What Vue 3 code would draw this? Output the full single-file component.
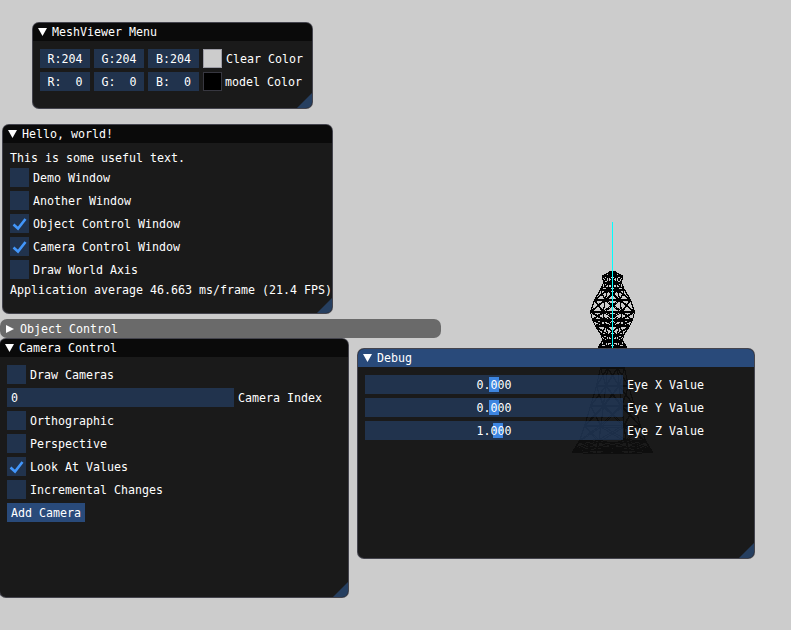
<template>
  <div class="canvas">
    <svg class="scene" width="791" height="630" shape-rendering="crispEdges">
      <path :d="meshPath" fill="none" stroke="#000" stroke-width="1" />
      <rect x="612" y="222" width="1" height="127" fill="#0ff" />
    </svg>

    <section class="window menu-win">
      <header class="title"><i class="arrow"></i>MeshViewer Menu</header>
      <div class="body">
        <div v-for="row in colorRows" :key="row.label" class="row color-row">
          <span v-for="c in row.channels" :key="c" class="frame channel">{{ c }}</span>
          <span class="swatch" :class="row.swatch"></span>
          <span class="label" :class="row.labelClass">{{ row.label }}</span>
        </div>
      </div>
      <i class="grip"></i>
    </section>

    <section class="window hello-win">
      <header class="title"><i class="arrow"></i>Hello, world!</header>
      <div class="body">
        <div class="line">This is some useful text.</div>
        <div v-for="item in helloChecks" :key="item.label" class="row">
          <span class="box">
            <svg v-if="item.on" width="19" height="19"><path d="M3.5 10.5 L8 14.5 L15.5 5" class="tick" /></svg>
          </span>
          <span class="label">{{ item.label }}</span>
        </div>
        <div class="line">Application average 46.663 ms/frame (21.4 FPS)</div>
      </div>
      <i class="grip"></i>
    </section>

    <header class="title collapsed"><i class="arrow right"></i>Object Control</header>

    <section class="window camera-win">
      <header class="title"><i class="arrow"></i>Camera Control</header>
      <div class="body">
        <div class="row">
          <span class="box"></span>
          <span class="label">Draw Cameras</span>
        </div>
        <div class="row">
          <span class="frame input">0</span>
          <span class="label">Camera Index</span>
        </div>
        <div v-for="item in cameraChecks" :key="item.label" class="row">
          <span class="box">
            <svg v-if="item.on" width="19" height="19"><path d="M3.5 10.5 L8 14.5 L15.5 5" class="tick" /></svg>
          </span>
          <span class="label">{{ item.label }}</span>
        </div>
        <div class="row">
          <button class="button">Add Camera</button>
        </div>
      </div>
      <i class="grip"></i>
    </section>

    <section class="window debug-win">
      <header class="title active"><i class="arrow"></i>Debug</header>
      <div class="body">
        <div v-for="s in sliders" :key="s.label" class="row">
          <div class="frame slider">
            <i class="grab" :style="{ left: s.grab + 'px' }"></i>
            <span class="slider-value">{{ s.value }}</span>
          </div>
          <span class="label">{{ s.label }}</span>
        </div>
      </div>
      <i class="grip"></i>
    </section>
  </div>
</template>

<script setup>
const colorRows = [
  { channels: ['R:204', 'G:204', 'B:204'], swatch: 'light', label: 'Clear Color', labelClass: '' },
  { channels: ['R:  0', 'G:  0', 'B:  0'], swatch: 'dark', label: 'model Color', labelClass: 'nudge' },
]

const helloChecks = [
  { label: 'Demo Window', on: false },
  { label: 'Another Window', on: false },
  { label: 'Object Control Window', on: true },
  { label: 'Camera Control Window', on: true },
  { label: 'Draw World Axis', on: false },
]

const cameraChecks = [
  { label: 'Orthographic', on: false },
  { label: 'Perspective', on: false },
  { label: 'Look At Values', on: true },
  { label: 'Incremental Changes', on: false },
]

const sliders = [
  { label: 'Eye X Value', value: '0.000', grab: 124 },
  { label: 'Eye Y Value', value: '0.000', grab: 124 },
  { label: 'Eye Z Value', value: '1.000', grab: 128 },
]

// rough wireframe of the model: [y, radius] rings around the centre line
const profile = [
  [272, 3], [276, 10], [283, 9], [290, 12], [300, 18], [312, 22], [320, 20],
  [326, 17], [335, 11], [341, 10], [347, 14], [368, 12], [386, 16], [406, 22], [426, 28],
  [441, 33], [449, 38], [452, 40],
]

function buildMesh() {
  const cx = 612.5
  const n = 8
  const pt = (ring, j) => {
    const a = ((j + 0.5) / n) * Math.PI * 2
    const [y, r] = profile[ring]
    return `${(cx + Math.cos(a) * r * 1.08).toFixed(1)} ${(y + Math.sin(a) * r * 0.04).toFixed(1)}`
  }
  let d = ''
  profile.forEach((_, i) => {
    for (let j = 0; j < n; j++) {
      d += `M${pt(i, j)}L${pt(i, j + 1)}`
      if (i < profile.length - 1) {
        d += `M${pt(i, j)}L${pt(i + 1, j)}M${pt(i, j)}L${pt(i + 1, j + 1)}M${pt(i, j + 1)}L${pt(i + 1, j)}`
      }
    }
  })
  return d
}

const meshPath = buildMesh()
</script>

<style>
html,
body {
  margin: 0;
  background: #ccc;
  overflow: hidden;
}
</style>

<style scoped>
.canvas {
  position: relative;
  width: 791px;
  height: 630px;
  overflow: hidden;
  background: #ccc;
  color: #fff;
  font-family: "DejaVu Sans Mono", monospace;
  font-size: 11.63px;
  line-height: 13px;
  white-space: pre;
}

.scene {
  position: absolute;
  left: 0;
  top: 0;
}

.window {
  position: absolute;
  box-sizing: border-box;
  display: flex;
  flex-direction: column;
  border: 1px solid rgba(110, 110, 128, 0.5);
  border-radius: 7px;
  background: rgba(15, 15, 15, 0.94);
  overflow: hidden;
}

.menu-win {
  left: 32px;
  top: 22px;
  width: 281px;
  height: 87px;
}

.hello-win {
  left: 2px;
  top: 124px;
  width: 331px;
  height: 190px;
}

.camera-win {
  left: -1px;
  top: 338px;
  width: 350px;
  height: 260px;
}

.debug-win {
  left: 357px;
  top: 348px;
  width: 398px;
  height: 211px;
}

.title {
  box-sizing: border-box;
  display: flex;
  align-items: center;
  flex: none;
  height: 18px;
  padding: 1px 0 0 5px;
  background: #0a0a0a;
}

.title.active {
  background: #294a7a;
}

.title.collapsed {
  position: absolute;
  left: 0;
  top: 319px;
  width: 441px;
  height: 19px;
  padding-left: 6px;
  border-radius: 7px;
  background: #6a6a6a;
}

.arrow {
  flex: none;
  align-self: flex-start;
  width: 9px;
  height: 8px;
  margin: 4px 5px 0 0;
  background: #fff;
  clip-path: polygon(0 0, 100% 0, 50% 100%);
}

.arrow.right {
  width: 8px;
  margin: 5px 6px 0 0;
  clip-path: polygon(0 0, 100% 50%, 0 100%);
}

.body {
  display: flex;
  flex-direction: column;
  gap: 4px;
  padding: 8px 7px;
}

.row {
  display: flex;
  align-items: center;
  gap: 4px;
  height: 19px;
}

.label {
  padding-top: 2px;
}

.line {
  box-sizing: border-box;
  height: 13px;
  padding-top: 1px;
}

.frame,
.box {
  background: rgba(41, 74, 122, 0.54);
}

.box {
  flex: none;
  width: 19px;
  height: 19px;
}

.box svg {
  display: block;
}

.tick {
  fill: none;
  stroke: #4296fa;
  stroke-width: 2.6;
}

.channel {
  width: 50px;
  height: 19px;
  line-height: 21px;
  text-align: center;
}

.channel:nth-child(3) {
  width: 51px;
}

.swatch {
  box-sizing: border-box;
  width: 19px;
  height: 19px;
  border: 1px solid rgba(110, 110, 128, 0.5);
}

.swatch.light {
  background: #ccc;
}

.swatch.dark {
  background: #000;
}

.nudge {
  margin-left: -1px;
}

.input {
  box-sizing: border-box;
  width: 227px;
  height: 19px;
  padding-left: 4px;
  line-height: 21px;
}

.button {
  height: 19px;
  padding: 2px 4px 0;
  border: 0;
  border-radius: 0;
  background: #294a7a;
  color: #fff;
  font: inherit;
}

.slider {
  position: relative;
  flex: none;
  width: 258px;
  height: 19px;
}

.grab {
  position: absolute;
  top: 2px;
  width: 10px;
  height: 15px;
  background: #3d85e0;
}

.slider-value {
  position: absolute;
  inset: 0;
  line-height: 21px;
  text-align: center;
}

.grip {
  position: absolute;
  right: 0;
  bottom: 0;
  width: 15px;
  height: 15px;
  background: #263f60;
  clip-path: polygon(100% 0, 100% 100%, 0 100%);
}
</style>
